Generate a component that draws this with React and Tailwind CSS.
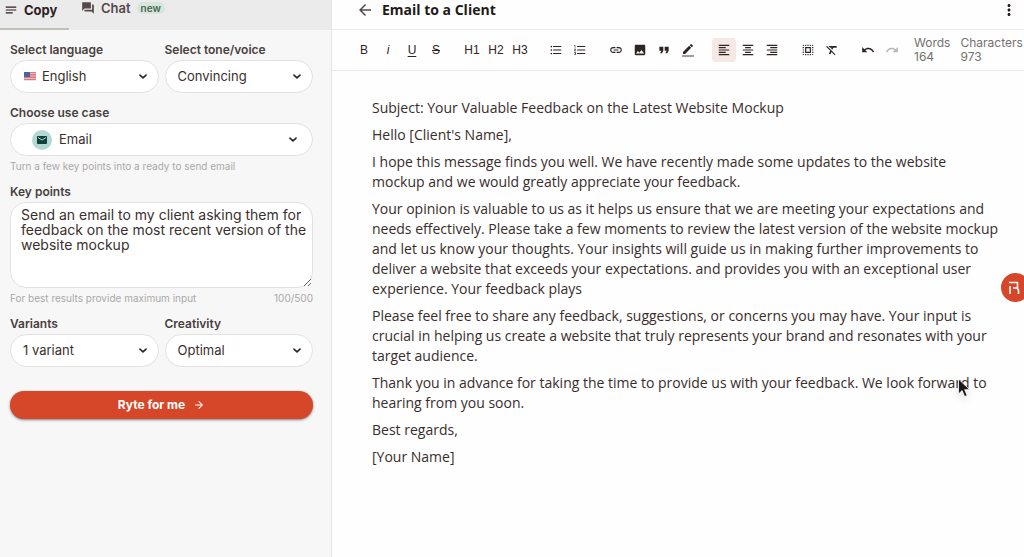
import React, { useState } from 'react';
import {
    MdArrowBack,
    MdArrowForward,
    MdEmail,
    MdFormatAlignCenter,
    MdFormatAlignLeft,
    MdFormatAlignRight,
    MdFormatClear,
    MdFormatListBulleted,
    MdFormatListNumbered,
    MdFormatQuote,
    MdImage,
    MdLink,
    MdMoreVert,
    MdNotes,
    MdQuestionAnswer,
    MdSelectAll,
} from 'react-icons/md';

const PARAGRAPHS = [
    'Subject: Your Valuable Feedback on the Latest Website Mockup',
    "Hello [Client's Name],",
    'I hope this message finds you well. We have recently made some updates to the website mockup and we would greatly appreciate your feedback.',
    'Your opinion is valuable to us as it helps us ensure that we are meeting your expectations and needs effectively. Please take a few moments to review the latest version of the website mockup and let us know your thoughts. Your insights will guide us in making further improvements to deliver a website that exceeds your expectations. and provides you with an exceptional user experience. Your feedback plays',
    'Please feel free to share any feedback, suggestions, or concerns you may have. Your input is crucial in helping us create a website that truly represents your brand and resonates with your target audience.',
    'Thank you in advance for taking the time to provide us with your feedback. We look forward to hearing from you soon.',
    'Best regards,',
    '[Your Name]',
];

const Undo = ({ className = '' }) => (
    <svg viewBox="0 0 24 24" className={`w-3.5 h-3.5 ${className}`} fill="currentColor" aria-hidden="true">
        <path d="M12.5 8c-2.65 0-5.05.99-6.9 2.6L2 7v9h9l-3.62-3.62c1.39-1.16 3.16-1.88 5.12-1.88 3.54 0 6.55 2.31 7.6 5.5l2.37-.78C21.08 11.03 17.15 8 12.5 8z" />
    </svg>
);

const TOOL_GROUPS = [
    [
        { label: 'Bold', icon: <span>B</span> },
        { label: 'Italic', icon: <span className="italic">i</span> },
        { label: 'Underline', icon: <span className="underline underline-offset-2">U</span> },
        { label: 'Strikethrough', icon: <span className="line-through">S</span> },
    ],
    [
        { label: 'Heading 1', icon: <span>H1</span> },
        { label: 'Heading 2', icon: <span>H2</span> },
        { label: 'Heading 3', icon: <span>H3</span> },
    ],
    [
        { label: 'Bulleted list', icon: <MdFormatListBulleted className="w-3.5 h-3.5" /> },
        { label: 'Numbered list', icon: <MdFormatListNumbered className="w-3.5 h-3.5" /> },
    ],
    [
        { label: 'Link', icon: <MdLink className="w-3.5 h-3.5" /> },
        { label: 'Image', icon: <MdImage className="w-3.5 h-3.5" /> },
        { label: 'Quote', icon: <MdFormatQuote className="w-4 h-4" /> },
        {
            label: 'Highlight',
            icon: (
                <span className="flex flex-col items-center gap-px">
                    <svg viewBox="3 3 18 18" className="w-2.5 h-2.5" fill="currentColor" aria-hidden="true">
                        <path d="M3 17.25V21h3.75L17.81 9.94l-3.75-3.75L3 17.25zM20.71 7.04a1 1 0 000-1.41l-2.34-2.34a1 1 0 00-1.41 0l-1.83 1.83 3.75 3.75 1.83-1.83z" />
                    </svg>
                    <span className="w-3 h-0.5 bg-[#a39d9c]" />
                </span>
            ),
        },
    ],
    [
        { label: 'Align left', icon: <MdFormatAlignLeft className="w-3.5 h-3.5" />, active: true },
        { label: 'Align center', icon: <MdFormatAlignCenter className="w-3.5 h-3.5" /> },
        { label: 'Align right', icon: <MdFormatAlignRight className="w-3.5 h-3.5" /> },
    ],
    [
        { label: 'Select all', icon: <MdSelectAll className="w-3.5 h-3.5" /> },
        { label: 'Clear formatting', icon: <MdFormatClear className="w-3.5 h-3.5" /> },
    ],
    [
        { label: 'Undo', icon: <Undo /> },
        { label: 'Redo', icon: <Undo className="-scale-x-100 text-[#b9b5b4]" /> },
    ],
];

const UsFlag = () => (
    <svg viewBox="0 0 12 9" className="w-3 h-[9px]" aria-hidden="true">
        <rect width="12" height="9" rx="1" fill="#f3dede" />
        <path d="M0 .7h12M0 2.9h12M0 5.1h12M0 7.3h12" stroke="#d4575c" strokeWidth="1.1" />
        <rect width="6" height="5" rx="0.6" fill="#4a629c" />
    </svg>
);

const EmailBadge = () => (
    <span className="flex w-5 h-5 items-center justify-center rounded-full bg-[#b3d8d4] text-[#12403a]">
        <MdEmail className="w-3 h-3" />
    </span>
);

const SelectField = ({ id, label, value, icon, iconClass = '', selectClass = 'pl-3', chevronClass = 'right-3' }) => (
    <div className="min-w-0">
        <label htmlFor={id} className="block text-xs leading-4 font-semibold text-[#493f3d]">
            {label}
        </label>
        <div className="relative mt-0.5">
            {icon && (
                <span className={`pointer-events-none absolute inset-y-0 flex items-center ${iconClass}`}>{icon}</span>
            )}
            <select
                id={id}
                defaultValue={value}
                className={`block w-full h-[33px] appearance-none rounded-full border border-[#e3e1df] bg-white text-[13px] text-[#3b302e] ${selectClass}`}
            >
                <option>{value}</option>
            </select>
            <svg
                viewBox="0 0 10 6"
                className={`pointer-events-none absolute top-3.5 w-2 h-[5px] text-[#2f2523] ${chevronClass}`}
                fill="none"
                stroke="currentColor"
                strokeWidth="2"
                strokeLinecap="round"
                strokeLinejoin="round"
                aria-hidden="true"
            >
                <path d="M1.2 1.2L5 4.8l3.8-3.6" />
            </svg>
        </div>
    </div>
);

const Sidebar = () => {
    const [keyPoints, setKeyPoints] = useState(
        'Send an email to my client asking them for feedback on the most recent version of the website mockup'
    );

    return (
        <aside className="w-[332px] shrink-0 border-r border-[#e6e5e4] bg-[#f7f7f7] font-['Inter',sans-serif]">
            {/* Tabs */}
            <nav className="flex h-[30px] items-start bg-[#ebebeb]">
                <button className="flex h-full w-[69px] items-start gap-1.5 border-b-2 border-[#c3c1b4] pl-1 text-[13px] leading-5 font-bold text-[#2b211f]">
                    <MdNotes className="mt-0.5 w-3.5 h-4" />
                    Copy
                </button>
                <button className="flex items-center gap-1.5 pl-3 text-[13px] leading-4 font-semibold text-[#54494a]">
                    <MdQuestionAnswer className="w-3.5 h-3.5" />
                    Chat
                    <span className="rounded-full bg-[#d5e6da] px-1 text-[10px] leading-3 font-semibold text-[#4b6355]">
                        new
                    </span>
                </button>
            </nav>

            <form className="px-2.5 pt-3 pb-4" onSubmit={(e) => e.preventDefault()}>
                <div className="grid grid-cols-2 gap-1.5 pr-2">
                    <SelectField
                        id="language"
                        label="Select language"
                        value="English"
                        icon={<UsFlag />}
                        iconClass="left-3.5"
                        selectClass="pl-[31px]"
                    />
                    <SelectField id="tone" label="Select tone/voice" value="Convincing" />
                </div>

                <div className="mt-3 pr-2">
                    <SelectField
                        id="use-case"
                        label="Choose use case"
                        value="Email"
                        icon={<EmailBadge />}
                        iconClass="left-[22px]"
                        selectClass="pl-12"
                        chevronClass="right-4"
                    />
                    <p className="mt-0.5 text-[10px] leading-4 text-[#aaa8a7]">
                        Turn a few key points into a ready to send email
                    </p>
                </div>

                <div className="mt-2.5 pr-2">
                    <label htmlFor="key-points" className="block text-xs leading-4 font-semibold text-[#493f3d]">
                        Key points
                    </label>
                    <textarea
                        id="key-points"
                        value={keyPoints}
                        onChange={(e) => setKeyPoints(e.target.value)}
                        className="mt-0.5 block w-full h-[86px] rounded-2xl border border-[#e3e1df] bg-white py-1 pl-2.5 pr-1 text-sm leading-[15px] text-[#3b302e]"
                    />
                    <div className="mt-0.5 flex justify-between text-[10px] leading-4 text-[#aaa8a7]">
                        <span>For best results provide maximum input</span>
                        <span>{keyPoints.length}/500</span>
                    </div>
                </div>

                <div className="mt-2.5 grid grid-cols-2 gap-1.5 pr-2">
                    <SelectField id="variants" label="Variants" value="1 variant" />
                    <SelectField id="creativity" label="Creativity" value="Optimal" />
                </div>

                <div className="mt-6 pr-2">
                    <button
                        type="submit"
                        className="flex w-full h-7 items-center justify-center gap-2 rounded-full bg-[#d6472a] text-xs font-bold text-white shadow-sm shadow-black/40"
                    >
                        Ryte for me
                        <MdArrowForward className="w-3 h-3" />
                    </button>
                </div>
            </form>
        </aside>
    );
};

const Toolbar = () => (
    <div className="flex h-[41px] items-center gap-3 border-b border-[#ebeae9] pl-5 text-[#2f2422]">
        {TOOL_GROUPS.map((group) => (
            <div key={group[0].label} className="flex">
                {group.map(({ label, icon, active }) => (
                    <button
                        key={label}
                        aria-label={label}
                        className={`flex w-6 h-6 items-center justify-center rounded-sm font-['Liberation_Sans',sans-serif] text-xs ${
                            active ? 'bg-[#f6e8e4]' : ''
                        }`}
                    >
                        {icon}
                    </button>
                ))}
            </div>
        ))}
        <div className="-ml-0.5 flex gap-2.5 font-['Inter',sans-serif] text-xs leading-[14px] text-[#77706f]">
            <div>
                Words
                <br />
                164
            </div>
            <div>
                Characters
                <br />
                973
            </div>
        </div>
    </div>
);

const App = () => (
    <div className="relative flex min-h-screen overflow-hidden bg-[#fefefe]">
        <Sidebar />

        <main className="min-w-0 flex-1 font-['Open_Sans',sans-serif]">
            <header className="flex h-[30px] items-start border-b border-[#ebeae9] pl-6 pr-1.5 text-[#231917]">
                <button aria-label="Back" className="mt-px">
                    <MdArrowBack className="w-[18px] h-[18px] text-[#54494a]" />
                </button>
                <h1 className="ml-2 text-sm font-bold">Email to a Client</h1>
                <button aria-label="More options" className="ml-auto mt-px">
                    <MdMoreVert className="w-[18px] h-[18px]" />
                </button>
            </header>

            <Toolbar />

            <article className="space-y-[7px] pt-[27px] pl-10 pr-6 text-sm leading-5 text-[#392d2b]">
                {PARAGRAPHS.map((text) => (
                    <p key={text}>{text}</p>
                ))}
            </article>
        </main>

        {/* Floating assistant button, partly tucked under the right edge */}
        <button
            aria-label="Open assistant"
            className="absolute top-[273px] -right-1.5 flex w-[29px] h-[29px] items-center justify-center rounded-full bg-[#d6472a] pr-1 text-white"
        >
            <svg
                viewBox="0 0 12 14"
                className="w-3 h-3.5"
                fill="none"
                stroke="currentColor"
                strokeWidth="1.6"
                strokeLinejoin="round"
                aria-hidden="true"
            >
                <path d="M2 13V5M1 1.5h8.5V7H5M9 7l1.5 2v4" />
            </svg>
        </button>

        {/* Mouse pointer */}
        <svg viewBox="0 0 14 20" className="pointer-events-none absolute top-[378px] left-[957px] w-3.5 h-5 drop-shadow-md" aria-hidden="true">
            <path d="M1.5 1v15l3.6-3.4 2.5 6 2.6-1.1-2.5-5.8h5z" fill="#1c1817" stroke="#fff" strokeWidth="0.8" />
        </svg>
    </div>
);

export default App;
